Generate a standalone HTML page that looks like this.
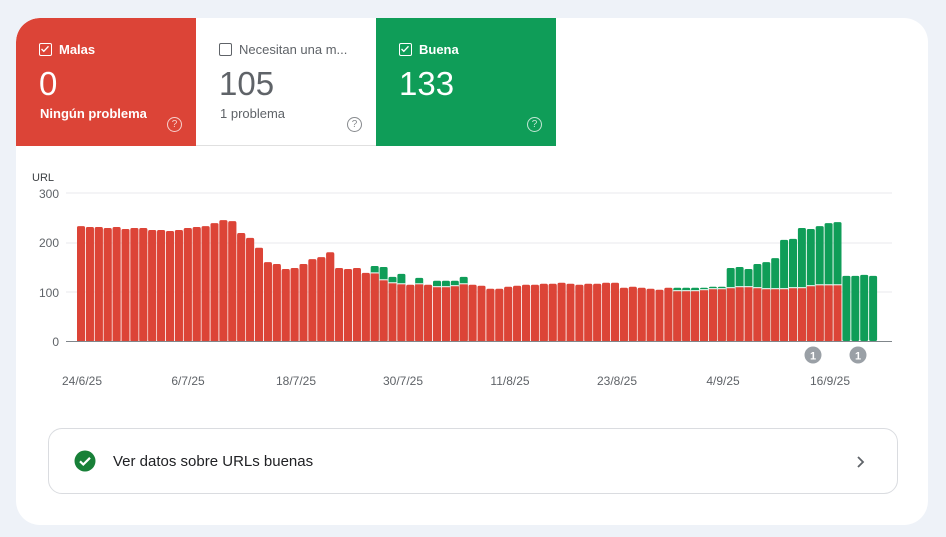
<!DOCTYPE html>
<html><head><meta charset="utf-8"><style>
body{margin:0;width:946px;height:537px;background:#eef2f8;font-family:"Liberation Sans",Roboto,sans-serif;overflow:hidden;position:relative}
.card{position:absolute;left:16px;top:18px;width:912px;height:507px;background:#fff;border-radius:24px;overflow:hidden}
.tile{position:absolute;top:0;width:180px;height:128px;box-sizing:border-box;padding:0 24px}
.t1{left:0;background:#dc4437;color:#fff;border-top-left-radius:24px}
.t2{left:180px;background:#fff;color:#5f6368;border-bottom:1px solid #e0e0e0}
.t3{left:360px;background:#0f9d58;color:#fff}
.lab{position:absolute;top:24px;left:23px;font-size:13px;display:flex;align-items:center}
.cb{width:13px;height:13px;border:1.5px solid currentColor;border-radius:2px;margin-right:7px;position:relative;box-sizing:border-box}
.num{position:absolute;top:47px;left:23px;font-size:33px}
.sub{position:absolute;top:88px;left:24px;font-size:13px}
.q{position:absolute;right:14px;top:99px;width:15px;height:15px;border:1.3px solid currentColor;border-radius:50%;box-sizing:border-box;font-size:10px;text-align:center;line-height:13px;opacity:.75}
.link{position:absolute;left:32px;top:410px;width:850px;height:66px;border:1px solid #dadce0;border-radius:14px;box-sizing:border-box}
</style></head><body>
<div class="card">
<div class="tile t1"><div class="lab" style="font-weight:bold"><span class="cb"><svg width="10" height="10" viewBox="0 0 10 10" style="position:absolute;left:0;top:0"><path d="M1.5 5l2.3 2.3 4.7-5" stroke="#fff" stroke-width="1.4" fill="none"/></svg></span>Malas</div><div class="num">0</div><div class="sub" style="font-weight:bold">Ningún problema</div><div class="q">?</div></div>
<div class="tile t2"><div class="lab" style="color:#5f6368"><span class="cb" style="color:#5f6368"></span>Necesitan una m...</div><div class="num" style="color:#5f6368">105</div><div class="sub">1 problema</div><div class="q">?</div></div>
<div class="tile t3"><div class="lab" style="font-weight:bold"><span class="cb"><svg width="10" height="10" viewBox="0 0 10 10" style="position:absolute;left:0;top:0"><path d="M1.5 5l2.3 2.3 4.7-5" stroke="#fff" stroke-width="1.4" fill="none"/></svg></span>Buena</div><div class="num">133</div><div class="q">?</div></div>
<div class="link">
<svg width="22" height="22" viewBox="0 0 22 22" style="position:absolute;left:25px;top:21px"><circle cx="11" cy="11" r="10.5" fill="#188038"/><path d="M6 11.3l3.3 3.2 6.7-6.7" stroke="#fff" stroke-width="2.2" fill="none"/></svg>
<div style="position:absolute;left:64px;top:24px;font-size:15px;color:#202124">Ver datos sobre URLs buenas</div>
<svg width="12" height="14" viewBox="0 0 12 14" style="position:absolute;left:806px;top:26px"><path d="M3 2l5 5-5 5" stroke="#5f6368" stroke-width="1.8" fill="none"/></svg>
</div>
</div>
<svg id="ch" width="946" height="400" style="position:absolute;left:0;top:0" font-family="Liberation Sans,sans-serif" font-size="12" fill="#5f6368">
<text x="32" y="181" font-size="11" fill="#3c4043">URL</text>
<line x1="66" y1="193" x2="892" y2="193" stroke="#e8eaed"/>
<line x1="66" y1="243" x2="892" y2="243" stroke="#e8eaed"/>
<line x1="66" y1="292" x2="892" y2="292" stroke="#e8eaed"/>
<text x="59" y="198" text-anchor="end">300</text>
<text x="59" y="247" text-anchor="end">200</text>
<text x="59" y="297" text-anchor="end">100</text>
<text x="59" y="346" text-anchor="end">0</text>
<g id="bars"></g>
<line x1="66" y1="341.5" x2="892" y2="341.5" stroke="#80868b"/>
<circle cx="813" cy="355" r="8.5" fill="#9aa0a6"/><text x="813" y="359.5" text-anchor="middle" fill="#fff" font-size="11" font-weight="bold">1</text>
<circle cx="858" cy="355" r="8.5" fill="#9aa0a6"/><text x="858" y="359.5" text-anchor="middle" fill="#fff" font-size="11" font-weight="bold">1</text>
<g text-anchor="middle">
<text x="82" y="385">24/6/25</text><text x="188" y="385">6/7/25</text><text x="296" y="385">18/7/25</text><text x="403" y="385">30/7/25</text><text x="510" y="385">11/8/25</text><text x="617" y="385">23/8/25</text><text x="723" y="385">4/9/25</text><text x="830" y="385">16/9/25</text>
</g>
</svg>
<script>
var r=[233,231,231,229,231,227,229,229,225,225,223,225,229,231,233,239,245,243,219,209,189,160,156,146,148,156,166,170,180,148,146,148,138,138,124,118,116,114,116,114,110,110,112,116,114,112,106,106,110,112,114,114,116,116,118,116,114,116,116,118,118,108,110,108,106,104,108,102,102,102,104,106,106,108,110,110,108,106,106,106,108,108,112,114,114,114,0,0,0,0];
var g={33:152,34:150,35:130,36:136,38:128,40:122,41:122,42:122,43:130,67:108,68:108,69:108,70:108,71:110,72:110,73:148,74:150,75:146,76:156,77:160,78:168,79:205,80:207,81:229,82:227,83:233,84:239,85:241,86:132,87:132,88:134,89:132};
var k=148/300,s='';
for(var i=0;i<90;i++){var x=(77+i*8.9).toFixed(1);var rv=r[i];
 if(g[i]){var gt=341-g[i]*k;s+='<rect x="'+x+'" y="'+gt.toFixed(1)+'" width="8" height="'+(341-gt).toFixed(1)+'" rx="1.5" fill="#0f9d58"/>';}
 if(rv){var rt=341-rv*k;s+='<rect x="'+x+'" y="'+rt.toFixed(1)+'" width="8" height="'+(341-rt).toFixed(1)+'" rx="1.5" fill="#dc4437"/>';
  s+='<rect x="'+x+'" y="'+(rt+1.5).toFixed(1)+'" width="8" height="'+(341-rt-1.5).toFixed(1)+'" fill="#dc4437"/>';
  if(g[i])s+='<rect x="'+x+'" y="'+(rt-0.5).toFixed(1)+'" width="8" height="1" fill="#fff"/>';}
}
document.getElementById('bars').innerHTML=s;
</script>
</body></html>
